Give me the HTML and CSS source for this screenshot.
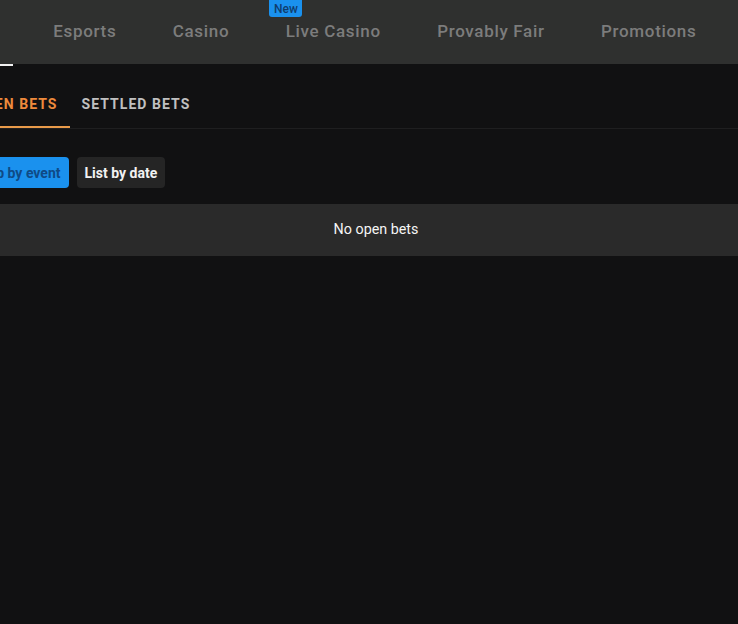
FILE: index.html
```html
<!DOCTYPE html>
<html>
<head>
<meta charset="utf-8">
<link rel="stylesheet" href="styles.css">
</head>
<body>
<header class="header">
  <nav class="nav">
    <a class="nav-item">Esports</a>
    <a class="nav-item">Casino</a>
    <a class="nav-item nav-item-new"><span class="badge">New</span>Live Casino</a>
    <a class="nav-item">Provably Fair</a>
    <a class="nav-item">Promotions</a>
  </nav>
</header>
<div class="active-line"></div>
<main class="main">
  <div class="tabs">
    <div class="tab tab-active">OPEN BETS</div>
    <div class="tab">SETTLED BETS</div>
  </div>
  <div class="toggles">
    <button class="toggle toggle-active">Group by event</button>
    <button class="toggle">List by date</button>
  </div>
  <div class="empty">No open bets</div>
</main>
</body>
</html>
```
FILE: styles.css
```css
html, body {
  margin: 0;
  padding: 0;
  background: #111112;
  font-family: Roboto, "Liberation Sans", sans-serif;
  overflow: hidden;
  width: 738px;
  height: 624px;
}
.header {
  height: 64px;
  background: #2f302f;
  display: flex;
  align-items: stretch;
}
.nav {
  display: flex;
  padding-left: 25px;
}
.nav-item {
  position: relative;
  display: flex;
  align-items: center;
  padding: 0 28.2px 2px;
  font-size: 17px;
  font-weight: 500;
  letter-spacing: 0.68px;
  color: #7c7c7c;
  white-space: nowrap;
}
.badge {
  position: absolute;
  top: 0;
  left: 12px;
  width: 33px;
  height: 17px;
  background: #1a91ee;
  color: #0f3d6e;
  font-size: 12px;
  font-weight: 500;
  letter-spacing: 0;
  display: flex;
  align-items: center;
  justify-content: center;
  border-radius: 0 0 3px 3px;
}
.active-line {
  width: 13px;
  height: 2px;
  background: #f2f2f2;
}
.main {
  margin-left: -36px;
  width: 824px;
}
.tabs {
  display: flex;
  height: 62px;
  border-bottom: 1px solid #1f1f20;
  margin-left: -2px;
}
.tab {
  display: flex;
  align-items: center;
  padding: 15px 12px 0;
  font-size: 14px;
  font-weight: 700;
  letter-spacing: 1.05px;
  color: #c0c0c0;
  border-bottom: 2px solid transparent;
  box-sizing: border-box;
  height: 62px;
}
.tab-active {
  color: #ee8a3c;
  border-bottom-color: #e89a4a;
}
.toggles {
  display: flex;
  gap: 8px;
  padding-top: 28px;
  margin-left: -6px;
}
.toggle {
  height: 31px;
  border: none;
  border-radius: 4px;
  padding: 0 8px;
  font-family: Roboto, "Liberation Sans", sans-serif;
  font-size: 14px;
  font-weight: 700;
  background: #252525;
  color: #f2f2f2;
}
.toggle-active {
  background: #1a91ee;
  color: #0f4a85;
}
.empty {
  margin-top: 16px;
  height: 52px;
  padding-bottom: 2px;
  box-sizing: border-box;
  background: #2a2a2a;
  color: #f5f5f5;
  font-size: 14.3px;
  display: flex;
  align-items: center;
  justify-content: center;
}
```
